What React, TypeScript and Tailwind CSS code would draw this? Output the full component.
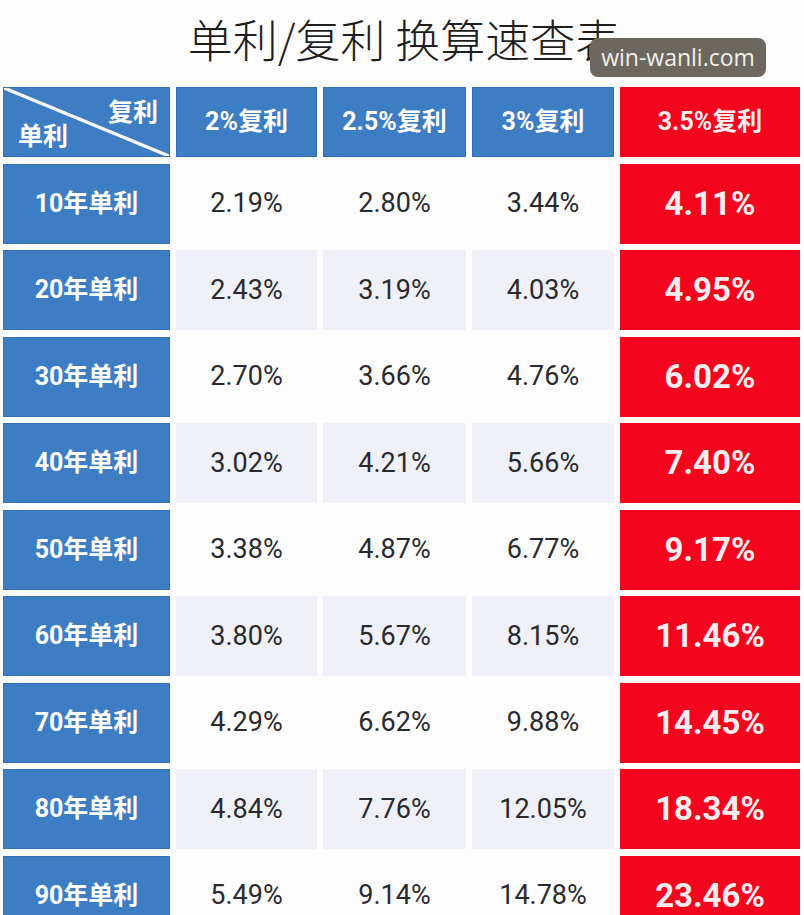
import React from 'react';

const rows: { label: string; values: string[]; top: string }[] = [
  { label: '10年单利', values: ['2.19%', '2.80%', '3.44%'], top: '4.11%' },
  { label: '20年单利', values: ['2.43%', '3.19%', '4.03%'], top: '4.95%' },
  { label: '30年单利', values: ['2.70%', '3.66%', '4.76%'], top: '6.02%' },
  { label: '40年单利', values: ['3.02%', '4.21%', '5.66%'], top: '7.40%' },
  { label: '50年单利', values: ['3.38%', '4.87%', '6.77%'], top: '9.17%' },
  { label: '60年单利', values: ['3.80%', '5.67%', '8.15%'], top: '11.46%' },
  { label: '70年单利', values: ['4.29%', '6.62%', '9.88%'], top: '14.45%' },
  { label: '80年单利', values: ['4.84%', '7.76%', '12.05%'], top: '18.34%' },
  { label: '90年单利', values: ['5.49%', '9.14%', '14.78%'], top: '23.46%' },
];

const cjk = "font-['Roboto','Noto_Sans_CJK_SC',sans-serif]";

const BlueCell: React.FC<{ children: React.ReactNode }> = ({ children }) => (
  <div className="flex items-center justify-center bg-[#3d7dc4] border border-[#3470b6] text-white font-bold text-[25px]">
    {children}
  </div>
);

const RedCell: React.FC<{ children: React.ReactNode; size?: string }> = ({ children, size }) => (
  <div className={`flex items-center justify-center bg-[#f2051d] text-[#fbecee] font-bold ${size ?? 'text-[33px]'}`}>
    {children}
  </div>
);

export default function App() {
  return (
    <div className={`w-[804px] h-[915px] overflow-hidden bg-[#fdfdfd] ${cjk} relative`}>
      <div className="h-[87px] flex items-start justify-center pt-[10px]">
        <h1 className="text-[45px] font-light text-[#1e1e1e] leading-[58px] font-['Noto_Sans_CJK_SC',sans-serif] ml-[4px]">
          单利/复利 换算速查表
        </h1>
      </div>

      <div className="absolute left-[590px] top-[38px] w-[176px] h-[39px] rounded-lg bg-[#6c6860] flex items-center justify-center">
        <span className="text-[23px] text-[#f2efe8] font-['Open_Sans',sans-serif] leading-none">win-wanli.com</span>
      </div>

      <div className="pl-[3px] grid grid-cols-[167px_141px_143px_142px_180px] gap-x-[6px] gap-y-[6.5px] grid-rows-[70px_repeat(9,80px)]">
        <div className="relative bg-[#3d7dc4] border border-[#3470b6] text-white font-bold text-[25px]">
          <svg className="absolute inset-0 w-full h-full" viewBox="0 0 167 70" preserveAspectRatio="none">
            <line x1="0" y1="0" x2="167" y2="70" stroke="#f4f6fa" strokeWidth="3.5" />
          </svg>
          <span className="absolute right-[11px] top-[12px] leading-none">复利</span>
          <span className="absolute left-[14px] bottom-[7px] leading-none">单利</span>
        </div>
        <BlueCell>2%复利</BlueCell>
        <BlueCell>2.5%复利</BlueCell>
        <BlueCell>3%复利</BlueCell>
        <RedCell size="text-[25px]">3.5%复利</RedCell>

        {rows.map((r, i) => (
          <React.Fragment key={r.label}>
            <BlueCell>{r.label}</BlueCell>
            {r.values.map((v) => (
              <div
                key={v}
                className={`flex items-center justify-center text-[27px] text-[#2a2a2e] ${i % 2 === 1 ? 'bg-[#eff0f8]' : 'bg-[#fdfdfd]'}`}
              >
                {v}
              </div>
            ))}
            <RedCell>{r.top}</RedCell>
          </React.Fragment>
        ))}
      </div>
    </div>
  );
}
